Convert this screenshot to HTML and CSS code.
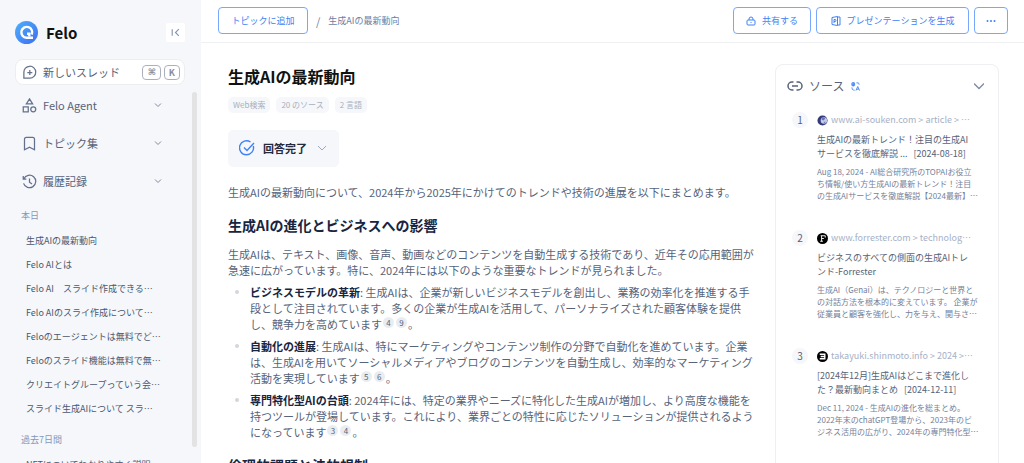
FILE: index.html
```
<!DOCTYPE html>
<html lang="ja">
<head>
    <meta charset="UTF-8">
    <meta name="viewport" content="width=device-width, initial-scale=1.0">
    <title>生成AIの最新動向 - Felo</title>
    <link rel="stylesheet" href="styles.css">
</head>
<body>
    <aside class="sidebar">
        <div class="brand">
            <svg class="logo" viewBox="0 0 22 22">
                <defs>
                    <linearGradient id="logo-fill" x1="0" y1="0" x2="1" y2="1">
                        <stop offset="0" stop-color="#4fb0fb"/>
                        <stop offset="1" stop-color="#3d6df2"/>
                    </linearGradient>
                </defs>
                <circle cx="11" cy="11" r="11" fill="url(#logo-fill)"/>
                <path d="M16 13A5.200 5.200 0 1 0 11 16h6.200M11.500 12.200h2.200v2.300" fill="none" stroke="#fff" stroke-width="2.300"/>
            </svg>
            <span class="brand-name">Felo</span>
            <button class="collapse" type="button" aria-label="サイドバーを閉じる">
                <svg viewBox="0 0 10 10"><path d="M2 2v6M8 2L5 5l3 3"/></svg>
            </button>
        </div>

        <button class="new-thread" type="button">
            <svg class="icon" viewBox="0 0 24 24"><path d="M3 21v-9a9.500 9.500 0 1 1 9.500 9H3zM12.500 8v8M8.500 12h8"/></svg>
            <span>新しいスレッド</span>
            <kbd class="key-cmd">⌘</kbd><kbd>K</kbd>
        </button>

        <div class="sidebar-body">
            <div class="sidebar-content">
                <nav class="menu">
                    <button type="button">
                        <svg class="icon" viewBox="0 0 24 24"><path d="M12 1.500l5 8H7zM2 14h8v8H2z"/><circle cx="18" cy="18" r="4"/></svg>
                        <span>Felo Agent</span>
                        <svg class="chevron" viewBox="0 0 8 8"><path d="M1 2.500l3 3 3-3"/></svg>
                    </button>
                    <button type="button">
                        <svg class="icon" viewBox="0 0 24 24"><path d="M4 22V5a3 3 0 0 1 3-3h10a3 3 0 0 1 3 3v17l-8-4z"/></svg>
                        <span>トピック集</span>
                        <svg class="chevron" viewBox="0 0 8 8"><path d="M1 2.500l3 3 3-3"/></svg>
                    </button>
                    <button type="button">
                        <svg class="icon" viewBox="0 0 24 24"><path d="M3 7.500A10 10 0 1 1 2.500 15M2 3v5h5M12 7v6l4 3"/></svg>
                        <span>履歴記録</span>
                        <svg class="chevron" viewBox="0 0 8 8"><path d="M1 2.500l3 3 3-3"/></svg>
                    </button>
                </nav>

                <h2 class="history-label">本日</h2>
                <ul class="history">
                    <li><a href="#">生成AIの最新動向</a></li>
                    <li><a href="#">Felo AIとは</a></li>
                    <li><a href="#">Felo AI　スライド作成できる…</a></li>
                    <li><a href="#">Felo AIのスライ作成について…</a></li>
                    <li><a href="#">Feloのエージェントは無料でど…</a></li>
                    <li><a href="#">Feloのスライド機能は無料で無…</a></li>
                    <li><a href="#">クリエイトグループっていう会…</a></li>
                    <li><a href="#">スライド生成AIについて スラ…</a></li>
                </ul>
                <h2 class="history-label">過去7日間</h2>
                <ul class="history">
                    <li><a href="#">NFTについてわかりやすく説明</a></li>
                </ul>
            </div>
            <div class="scroll-thumb"></div>
        </div>
    </aside>

    <div class="page">
        <header class="topbar">
            <button class="btn btn-topic" type="button">トピックに追加</button>
            <span class="slash">/</span>
            <span class="crumb">生成AIの最新動向</span>
            <div class="actions">
                <button class="btn btn-share" type="button">
                    <svg viewBox="0 0 10 10"><rect x="1" y="4" width="8" height="5" rx="1"/><path d="M3 4V3a2 2 0 0 1 4 0v1M5 6v1"/></svg>
                    共有する
                </button>
                <button class="btn btn-slides" type="button">
                    <svg viewBox="0 0 10 10"><path d="M6.500 1H9v8H6.500M1 1.500L6.500.5v9L1 8.500zM3 7V3.500h1a1 1 0 0 1 0 2H3"/></svg>
                    プレゼンテーションを生成
                </button>
                <button class="btn btn-more" type="button" aria-label="その他">
                    <svg class="dots" viewBox="0 0 10 10"><circle cx="1.500" cy="5" r="1"/><circle cx="5" cy="5" r="1"/><circle cx="8.500" cy="5" r="1"/></svg>
                </button>
            </div>
        </header>

        <div class="columns">
            <main class="answer">
                <h1>生成AIの最新動向</h1>
                <div class="tags">
                    <span>Web検索</span>
                    <span>20 のソース</span>
                    <span>2 言語</span>
                </div>
                <button class="status" type="button">
                    <svg class="check" viewBox="0 0 16 16"><path d="M14.300 6A7 7 0 1 1 11.500 2M5 7.500l3 3L15 3"/></svg>
                    回答完了
                    <svg class="chevron" viewBox="0 0 8 8"><path d="M0 2l4 4 4-4"/></svg>
                </button>

                <p class="intro">生成AIの最新動向について、2024年から2025年にかけてのトレンドや技術の進展を以下にまとめます。</p>
                <h2>生成AIの進化とビジネスへの影響</h2>
                <p>生成AIは、テキスト、画像、音声、動画などのコンテンツを自動生成する技術であり、近年その応用範囲が急速に広がっています。特に、2024年には以下のような重要なトレンドが見られました。</p>
                <ul class="points">
                    <li><strong>ビジネスモデルの革新</strong>: 生成AIは、企業が新しいビジネスモデルを創出し、業務の効率化を推進する手段として注目されています。多くの企業が生成AIを活用して、パーソナライズされた顧客体験を提供し、競争力を高めています<a class="cite" href="#">4</a><a class="cite" href="#">9</a>。</li>
                    <li><strong>自動化の進展</strong>: 生成AIは、特にマーケティングやコンテンツ制作の分野で自動化を進めています。企業は、生成AIを用いてソーシャルメディアやブログのコンテンツを自動生成し、効率的なマーケティング活動を実現しています<a class="cite" href="#">5</a><a class="cite" href="#">6</a>。</li>
                    <li><strong>専門特化型AIの台頭</strong>: 2024年には、特定の業界やニーズに特化した生成AIが増加し、より高度な機能を持つツールが登場しています。これにより、業界ごとの特性に応じたソリューションが提供されるようになっています<a class="cite" href="#">3</a><a class="cite" href="#">4</a>。</li>
                </ul>
                <h2>倫理的課題と法的規制</h2>
            </main>

            <section class="sources">
                <div class="sources-head">
                    <svg class="link-icon" viewBox="0 0 16 10"><path d="M6.500 1H5a4 4 0 0 0 0 8h1.500M9.500 1H11a4 4 0 0 1 0 8H9.500M5 5h6"/></svg>
                    <h2>ソース</h2>
                    <svg class="translate" viewBox="0 0 10 10"><path d="M1 1h3v3H1zM1 2.500h3M2.500 0v5M6 1h2q1 0 1 2M1 6q0 3 2 3h1M5.500 9.500L7.500 5l2 4.500M6.300 8h2.400"/></svg>
                    <svg class="chevron" viewBox="0 0 8 8"><path d="M0 2l4 4 4-4"/></svg>
                </div>
                <ol class="source-list">
                    <li>
                        <span class="num">1</span>
                        <div class="source">
                            <div class="url">
                                <svg viewBox="0 0 12 12"><circle cx="6" cy="6" r="5.500" fill="#34397a"/><circle cx="7.500" cy="6" r="3.500" fill="#c3cce8"/><path d="M5 3q3-1 4 1l-2 2-2-1zM7 8l2-1v2z" fill="#6874b0"/></svg>
                                <span>www.ai-souken.com &gt; article &gt; …</span>
                            </div>
                            <a class="source-title" href="#">生成AIの最新トレンド！注目の生成AIサービスを徹底解説 ...&nbsp;&nbsp; [2024-08-18]</a>
                            <p>Aug 18, 2024 - AI総合研究所のTOPAIお役立ち情報/使い方生成AIの最新トレンド！注目の生成AIサービスを徹底解説【2024最新】…</p>
                        </div>
                    </li>
                    <li>
                        <span class="num">2</span>
                        <div class="source">
                            <div class="url">
                                <svg viewBox="0 0 12 12"><circle cx="6" cy="6" r="6" fill="#000"/><path d="M4 3h5v2M5 3v6M3.500 9h3M5 6h2.500" fill="none" stroke="#fff"/></svg>
                                <span>www.forrester.com &gt; technolog…</span>
                            </div>
                            <a class="source-title" href="#">ビジネスのすべての側面の生成AIトレンド-Forrester</a>
                            <p>生成AI（Genai）は、テクノロジーと世界との対話方法を根本的に変えています。 企業が従業員と顧客を強化し、力を与え、関与さ…</p>
                        </div>
                    </li>
                    <li>
                        <span class="num">3</span>
                        <div class="source">
                            <div class="url">
                                <svg viewBox="0 0 12 12"><circle cx="6" cy="6" r="6" fill="#000"/><path d="M3 3.500h5.500v5H3M4 6h4.500" fill="none" stroke="#fff" stroke-width="1.500"/></svg>
                                <span>takayuki.shinmoto.info &gt; 2024 &gt;…</span>
                            </div>
                            <a class="source-title" href="#">[2024年12月]生成AIはどこまで進化した？最新動向まとめ&nbsp;&nbsp; [2024-12-11]</a>
                            <p>Dec 11, 2024 - 生成AIの進化を総まとめ。2022年末のchatGPT登場から、2023年のビジネス活用の広がり、2024年の専門特化型…</p>
                        </div>
                    </li>
                </ol>
            </section>
        </div>
    </div>
</body>
</html>
```
FILE: styles.css
```
* {
    box-sizing: border-box;
}

body {
    margin: 0;
    display: flex;
    height: 100vh;
    overflow: hidden;
    background: #fff;
    color: #56637a;
    font-family: "Noto Sans CJK JP", sans-serif;
    font-size: 11px;
    line-height: 16px;
}

h1, h2, p, ul, ol {
    margin: 0;
    padding: 0;
}

ul, ol {
    list-style: none;
}

a {
    color: inherit;
    text-decoration: none;
}

button {
    font: inherit;
    color: inherit;
    border: none;
    background: none;
    padding: 0;
    cursor: pointer;
}

svg {
    flex: none;
    fill: none;
    stroke: currentColor;
}

/* sidebar */
.sidebar {
    flex: none;
    width: 201px;
    display: flex;
    flex-direction: column;
    background: #f5f7fa;
}

.brand {
    display: flex;
    align-items: center;
    padding: 21px 16px 0 15px;
}

.logo {
    width: 23px;
    height: 23px;
    stroke: none;
}

.brand-name {
    margin-left: 8px;
    color: #111;
    font-size: 15px;
    font-weight: 700;
    line-height: 22px;
}

.collapse {
    display: flex;
    margin-left: auto;
    padding: 4px;
    border-radius: 2px;
    background: #fff;
    color: #7f92b5;
}

.collapse svg {
    width: 11px;
    height: 11px;
}

.new-thread {
    display: flex;
    align-items: center;
    margin: 15px 16px 0 15px;
    padding: 4px;
    border: 1px solid #eceef1;
    border-radius: 8px;
    background: #fff;
}

.icon {
    width: 15px;
    height: 15px;
    stroke: #64718c;
    stroke-width: 2;
}

.new-thread .icon {
    margin: 0 6px 0 2px;
}

kbd {
    margin-left: 3px;
    padding: 0 4px;
    border: 1px solid #abb1bc;
    border-radius: 4px;
    color: #858d9c;
    font-family: inherit;
    font-size: 9px;
    font-weight: 700;
    line-height: 13px;
}

.key-cmd {
    margin-left: auto;
    font-family: "DejaVu Sans", sans-serif;
}

.sidebar-body {
    flex: 1;
    min-height: 0;
    display: flex;
    justify-content: space-between;
    padding: 7px 4px 16px 21px;
}

.sidebar-content {
    width: 148px;
}

.menu button {
    display: flex;
    align-items: center;
    width: 100%;
    height: 38px;
    padding: 0 7px 0 1px;
}

.menu {
    margin-top: -6px;
}

.menu .icon {
    margin-right: 6px;
}

.chevron {
    width: 8px;
    height: 8px;
    margin-left: auto;
    stroke: #7d8ba5;
}

.history-label {
    padding: 8px 0 5px;
    color: #8497bd;
    font-size: 9px;
    font-weight: 400;
    line-height: 16px;
}

.history {
    padding: 0 0 3px 5px;
    color: #4b5870;
    font-size: 9px;
    line-height: 24px;
    white-space: nowrap;
}

.scroll-thumb {
    width: 5px;
    border-radius: 3px;
    background: #e3e3e3;
}

/* top bar */
.page {
    flex: 1;
    min-width: 0;
}

.topbar {
    display: flex;
    align-items: center;
    padding: 7px 16px 8px 17px;
    border-bottom: 1px solid #eff0f2;
    color: #6c7ea3;
    font-size: 9px;
}

.btn {
    display: flex;
    align-items: center;
    justify-content: center;
    height: 27px;
    border: 1px solid #78a8fb;
    border-radius: 4px;
    color: #3f82f6;
}

.btn svg {
    width: 10px;
    height: 10px;
    margin-right: 6px;
}

.btn .dots {
    margin: 0;
    fill: currentColor;
    stroke: none;
}

.btn-topic {
    width: 90px;
}

.btn-share {
    width: 78px;
}

.btn-slides {
    width: 153px;
}

.btn-more {
    width: 34px;
}

.slash {
    margin: 0 8px;
    font-size: 11px;
}

.actions {
    display: flex;
    gap: 5px;
    margin-left: auto;
}

/* answer */
.columns {
    display: flex;
    justify-content: space-between;
    align-items: flex-start;
    padding: 21px 25px 0 27px;
}

.answer {
    flex: 0 1 530px;
}

.answer h1 {
    color: #111;
    font-size: 16px;
    font-weight: 700;
    line-height: 24px;
}

.tags {
    display: flex;
    gap: 6px;
    margin-top: 9px;
}

.tags span {
    padding: 0 5px;
    border-radius: 5px;
    background: #f5f7fa;
    color: #a6b0c0;
    font-size: 8px;
}

.status {
    display: flex;
    align-items: center;
    margin-top: 17px;
    padding: 10px 13px 11px 11px;
    border-radius: 5px;
    background: #f5f7fa;
    color: #252b3d;
    font-weight: 700;
}

.check {
    width: 16px;
    height: 16px;
    margin-right: 8px;
    stroke: #3f82f6;
    stroke-width: 1.4;
}

.status .chevron {
    margin-left: 11px;
    stroke: #9ba8bd;
}

.intro {
    margin-top: 17px;
}

.answer h2 {
    margin: 15px 0 11px;
    color: #172540;
    font-size: 14px;
    font-weight: 700;
    line-height: 20px;
}

.points li {
    position: relative;
    margin-top: 6px;
    padding-left: 22px;
}

.points li::before {
    content: "";
    position: absolute;
    left: 7px;
    top: 6px;
    width: 4px;
    height: 4px;
    border-radius: 50%;
    background: #d3d6db;
}

.points strong {
    color: #172540;
    font-weight: 700;
}

.cite {
    display: inline-block;
    width: 11px;
    height: 11px;
    margin: 0 1px;
    border-radius: 50%;
    background: #e9edf2;
    font-size: 8px;
    line-height: 11px;
    text-align: center;
    vertical-align: 3px;
}

/* sources */
.sources {
    flex: none;
    width: 224px;
    border: 1px solid #edeff2;
    border-radius: 8px;
}

.sources-head {
    display: flex;
    align-items: center;
    padding: 12px 14px 0 11px;
}

.sources-head h2 {
    margin: 0 7px 0 6px;
    font-size: 12px;
    font-weight: 400;
    line-height: 18px;
}

.link-icon {
    width: 16px;
    height: 10px;
    stroke-width: 1.5;
}

.translate {
    width: 9px;
    height: 9px;
    color: #3f82f6;
}

.sources-head .chevron {
    width: 10px;
    height: 10px;
}

.source-list {
    padding: 17px 14px 16px 16px;
}

.source-list li {
    display: flex;
    gap: 9px;
    margin-bottom: 28px;
}

.num {
    flex: none;
    width: 16px;
    height: 16px;
    border-radius: 50%;
    background: #f5f7fa;
    font-size: 10px;
    text-align: center;
}

.source {
    flex: 1;
    min-width: 0;
}

.url {
    display: flex;
    align-items: center;
    gap: 3px;
    color: #a6b1c6;
    font-size: 9px;
    white-space: nowrap;
}

.url svg {
    width: 11px;
    height: 11px;
    stroke: none;
}

.source-title {
    display: block;
    margin-top: 5px;
    padding-right: 8px;
    font-size: 9px;
    line-height: 14px;
}

.source p {
    margin-top: 5px;
    padding-right: 5px;
    color: #74819a;
    font-size: 8px;
    line-height: 12px;
}
```
